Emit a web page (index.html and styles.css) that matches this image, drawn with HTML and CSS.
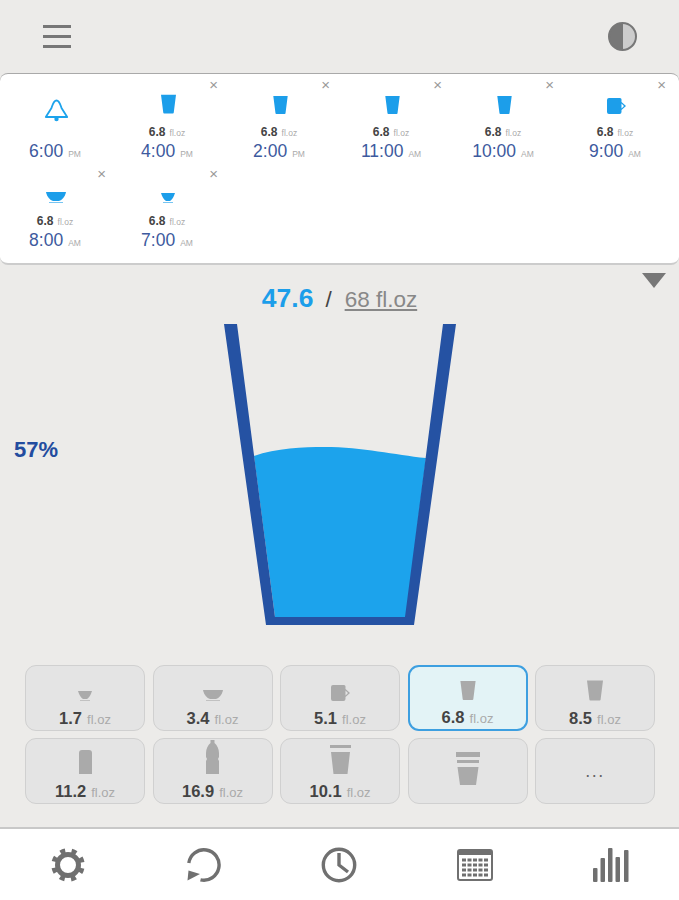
FILE: index.html
```html
<!DOCTYPE html>
<html lang="en">
<head>
    <meta charset="UTF-8">
    <meta name="viewport" content="width=device-width, initial-scale=1.0">
    <title>Water Tracker</title>
    <link rel="stylesheet" href="styles.css">
</head>
<body>
    <svg class="defs" width="0" height="0">
        <symbol id="cup" viewBox="0 0 16 20"><path d="M0 0H16L13.6 19a1 1 0 0 1-1 1H3.4a1 1 0 0 1-1-1Z"/></symbol>
        <symbol id="mug" viewBox="0 0 19 16"><path fill-rule="evenodd" d="M2 0H13a1.500 1.500 0 0 1 1.500 1.500V4L19 8l-4.500 4V14a2 2 0 0 1-2 2H2a2 2 0 0 1-2-2V2a2 2 0 0 1 2-2ZM14.500 5.500V10.500L17 8Z"/></symbol>
        <symbol id="bowl" viewBox="0 0 20 11"><path d="M0 0H20C19 5 16 8 13 9H7C4 8 1 5 0 0Z"/><path d="M3 10H17V11H3Z" opacity=".6"/></symbol>
        <symbol id="small" viewBox="0 0 14 10"><path d="M0 0H14C13 4 10.500 7 9 8H5C3.500 7 1 4 0 0Z"/><path d="M2 9H12V10H2Z" opacity=".6"/></symbol>
        <symbol id="flask" viewBox="0 0 13 24"><path d="M3 0H10a3 3 0 0 1 3 3V24H0V3a3 3 0 0 1 3-3Z"/></symbol>
        <symbol id="bottle" viewBox="0 0 13 34"><path d="M4.500 0H8.500V3C11 5 13 9 13 13V17L12 19 13 21V34H0V21L1 19 0 17V13C0 9 2 5 4.500 3Z"/></symbol>
        <symbol id="lidcup" viewBox="0 0 21 29"><path d="M0 0H21V3H0ZM1 7H20L17.500 29H3.500Z"/></symbol>
        <symbol id="stack" viewBox="0 0 24 33"><path d="M0 0H24V5H0ZM1 8H23V11H1ZM1.500 15H22.500L20 33H4Z"/></symbol>
    </svg>

    <header class="top-bar">
        <button class="menu-btn" aria-label="Menu"><span></span><span></span><span></span></button>
        <div class="theme-btn"></div>
    </header>

    <section class="log-card">
        <div class="log-item">
            <svg class="bell" width="25" height="25" viewBox="0 0 25 25"><path d="M12.500 2.500C9.500 2.500 8.500 7 7.500 10L1.800 19H23.200L17.500 10C16.500 7 15.500 2.500 12.500 2.500Z" fill="none" stroke="currentColor" stroke-width="1.800" stroke-linejoin="round"/><circle cx="12.500" cy="21" r="2.200" fill="currentColor"/></svg>
            <div class="log-time">6:00<small>PM</small></div>
        </div>
        <div class="log-item">
            <span class="close">×</span>
            <svg class="log-icon" width="15" height="20"><use href="#cup"/></svg>
            <div class="log-amount">6.8<small>fl.oz</small></div>
            <div class="log-time">4:00<small>PM</small></div>
        </div>
        <div class="log-item">
            <span class="close">×</span>
            <svg class="log-icon" width="15" height="18"><use href="#cup"/></svg>
            <div class="log-amount">6.8<small>fl.oz</small></div>
            <div class="log-time">2:00<small>PM</small></div>
        </div>
        <div class="log-item">
            <span class="close">×</span>
            <svg class="log-icon" width="15" height="18"><use href="#cup"/></svg>
            <div class="log-amount">6.8<small>fl.oz</small></div>
            <div class="log-time">11:00<small>AM</small></div>
        </div>
        <div class="log-item">
            <span class="close">×</span>
            <svg class="log-icon" width="15" height="18"><use href="#cup"/></svg>
            <div class="log-amount">6.8<small>fl.oz</small></div>
            <div class="log-time">10:00<small>AM</small></div>
        </div>
        <div class="log-item">
            <span class="close">×</span>
            <svg class="log-icon" width="19" height="16"><use href="#mug"/></svg>
            <div class="log-amount">6.8<small>fl.oz</small></div>
            <div class="log-time">9:00<small>AM</small></div>
        </div>
        <div class="log-item">
            <span class="close">×</span>
            <svg class="log-icon" width="20" height="11"><use href="#bowl"/></svg>
            <div class="log-amount">6.8<small>fl.oz</small></div>
            <div class="log-time">8:00<small>AM</small></div>
        </div>
        <div class="log-item">
            <span class="close">×</span>
            <svg class="log-icon" width="14" height="10"><use href="#small"/></svg>
            <div class="log-amount">6.8<small>fl.oz</small></div>
            <div class="log-time">7:00<small>AM</small></div>
        </div>
    </section>

    <div class="total-row">
        <span></span>
        <div class="total"><b>47.6</b><i>/</i><u>68 fl.oz</u></div>
        <div class="arrow"></div>
    </div>

    <section class="glass-row">
        <div class="percent">57%</div>
        <svg class="glass" width="232" height="301" viewBox="0 0 232 301">
            <path d="M30 132C52 124 80 123 100 123C140 123 170 131 202 134L182 293H51Z" fill="#1ca3ec"/>
            <path d="M0 0H13L51 293H181L219 0H232L190 301H42Z" fill="#2552a3"/>
        </svg>
    </section>

    <section class="tiles">
        <button class="tile"><svg width="14" height="10"><use href="#small"/></svg><span class="tile-label">1.7<small>fl.oz</small></span></button>
        <button class="tile"><svg width="20" height="11"><use href="#bowl"/></svg><span class="tile-label">3.4<small>fl.oz</small></span></button>
        <button class="tile"><svg width="19" height="16"><use href="#mug"/></svg><span class="tile-label">5.1<small>fl.oz</small></span></button>
        <button class="tile active"><svg width="16" height="19"><use href="#cup"/></svg><span class="tile-label">6.8<small>fl.oz</small></span></button>
        <button class="tile"><svg width="16" height="21"><use href="#cup"/></svg><span class="tile-label">8.5<small>fl.oz</small></span></button>
        <button class="tile"><svg width="13" height="24"><use href="#flask"/></svg><span class="tile-label">11.2<small>fl.oz</small></span></button>
        <button class="tile"><svg width="13" height="34"><use href="#bottle"/></svg><span class="tile-label">16.9<small>fl.oz</small></span></button>
        <button class="tile"><svg width="21" height="29"><use href="#lidcup"/></svg><span class="tile-label">10.1<small>fl.oz</small></span></button>
        <button class="tile plain"><svg width="24" height="33"><use href="#stack"/></svg></button>
        <button class="tile plain more">...</button>
    </section>

    <nav class="tab-bar">
        <svg width="36" height="36" viewBox="0 0 36 36" fill="none" stroke="currentColor">
            <circle cx="18" cy="18" r="10.500" stroke-width="5"/>
            <circle cx="18" cy="18" r="14.500" stroke-width="4.500" stroke-dasharray="5 6.390" transform="rotate(12.600 18 18)"/>
        </svg>
        <svg width="36" height="36" viewBox="0 0 36 36" fill="none" stroke="currentColor">
            <path d="M2.800 16A15.200 15.200 0 1 1 14.500 32.800" stroke-width="3.400"/>
            <path d="M1.500 33.500L2.500 23.500L14 27Z" fill="currentColor" stroke="none"/>
        </svg>
        <svg width="36" height="36" viewBox="0 0 36 36" fill="none" stroke="currentColor">
            <circle cx="18" cy="18" r="15.700" stroke-width="3.400"/>
            <path d="M18 6V18L27 25" stroke-width="3.400"/>
        </svg>
        <svg width="36" height="32" viewBox="0 0 36 32" fill="none" stroke="currentColor">
            <rect x="1" y="1" width="34" height="30" rx="2" stroke-width="2"/>
            <path d="M1 3.500H35" stroke-width="5"/>
            <path d="M5 11H31M5 16H31M5 21H31M5 26H31" stroke-width="3" stroke-dasharray="4 1.500"/>
        </svg>
        <svg width="38" height="34" viewBox="0 0 38 34" fill="currentColor">
            <rect x="1" y="20" width="4.500" height="14" rx="1"/>
            <rect x="8.500" y="10" width="4.500" height="24" rx="1"/>
            <rect x="16" y="0" width="4.500" height="34" rx="1"/>
            <rect x="23.500" y="9" width="4.500" height="25" rx="1"/>
            <rect x="32" y="2" width="4.500" height="32" rx="1"/>
        </svg>
    </nav>
</body>
</html>
```

FILE: styles.css
```css
body {
    font-family: "Liberation Sans", Arial, sans-serif;
    background-color: #ecebe9;
    margin: 0;
    height: 900px;
    overflow: hidden;
}

.defs {
    display: block;
    height: 0;
}

button {
    font-family: inherit;
}

/* top bar */
.top-bar {
    height: 73px;
    display: flex;
    align-items: center;
    justify-content: space-between;
    padding: 0 43px;
    box-sizing: border-box;
}

.menu-btn {
    display: flex;
    flex-direction: column;
    gap: 7.5px;
    width: 28px;
    padding: 0;
    border: none;
    background: none;
}

.menu-btn span {
    height: 2.5px;
    background-color: #777;
}

.theme-btn {
    width: 25px;
    height: 25px;
    border: 2px solid #777;
    border-radius: 50%;
    margin-right: -1px;
    background: linear-gradient(90deg, #777 50%, #ccc 50%);
}

/* today's log */
.log-card {
    height: 192px;
    box-sizing: border-box;
    padding-top: 2px;
    background-color: #fff;
    border-top: 1px solid #a9a9a9;
    border-bottom: 2px solid #ccc;
    border-radius: 8px;
    display: grid;
    grid-template-columns: repeat(6, 112px);
    grid-auto-rows: 89px;
    align-content: start;
}

.log-item {
    position: relative;
    display: flex;
    flex-direction: column;
    align-items: center;
    justify-content: flex-end;
    padding-bottom: 1px;
    color: #1ca3ec;
}

.log-icon {
    fill: #1c9eea;
    margin-bottom: 11px;
}

.bell {
    margin-bottom: 18px;
}

.close {
    position: absolute;
    top: 1px;
    right: 6px;
    font-size: 15px;
    line-height: 15px;
    color: #999;
}

.log-amount {
    font-size: 12px;
    font-weight: bold;
    line-height: 14px;
    margin: 0 2px 1px 0;
    color: #444;
}

.log-amount small {
    font-size: 8.5px;
    font-weight: normal;
    color: #aaa;
    margin-left: 4px;
}

.log-time {
    font-size: 17.5px;
    line-height: 20px;
    margin-right: 2px;
    color: #3d5a9e;
}

.log-time small {
    font-size: 8.5px;
    color: #aaa;
    margin-left: 5px;
}

/* total */
.total-row {
    height: 59px;
    display: grid;
    grid-template-columns: 1fr auto 1fr;
    align-items: center;
}

.total {
    display: flex;
    align-items: baseline;
    padding-top: 7px;
    color: #888;
    font-size: 22.5px;
}

.total b {
    font-size: 26.5px;
    color: #1c9eea;
}

.total i {
    font-style: normal;
    color: #444;
    margin: 0 13px 0 12px;
}

.arrow {
    justify-self: end;
    align-self: start;
    margin: 8px 13px 0 0;
    border-left: 12px solid transparent;
    border-right: 12px solid transparent;
    border-top: 15px solid #777;
}

/* glass */
.glass-row {
    display: grid;
    grid-template-columns: 224px 232px;
    height: 301px;
}

.percent {
    font-size: 22px;
    font-weight: bold;
    color: #234c9f;
    padding: 113px 0 0 14px;
}

/* quick add */
.tiles {
    display: grid;
    grid-template-columns: repeat(5, 120px);
    grid-auto-rows: 66px;
    gap: 7px 7.5px;
    margin: 40px 0 23px 25px;
}

.tile {
    display: flex;
    flex-direction: column;
    align-items: center;
    justify-content: flex-end;
    padding: 0 0 1px;
    box-sizing: border-box;
    background-color: #e4e4e4;
    border: 1.5px solid #d0d0d0;
    border-radius: 11px;
    fill: #aaa;
}

.tile svg {
    margin-bottom: 8px;
}

.tile.active {
    background-color: #e3f3f6;
    border: 2px solid #3d9fe0;
}

.tile.plain {
    justify-content: center;
    padding: 0;
}

.tile.plain svg {
    margin: 0 0 5px;
}

.tile.more {
    font-size: 18px;
    letter-spacing: 1.5px;
    color: #666;
}

.tile-label {
    font-size: 16.5px;
    font-weight: bold;
    line-height: 18px;
    color: #444;
}

.tile-label small {
    font-size: 13px;
    font-weight: normal;
    color: #aaa;
    margin-left: 5px;
}

/* bottom tabs */
.tab-bar {
    height: 73px;
    box-sizing: border-box;
    background-color: #fff;
    border-top: 2px solid #c8c8c8;
    display: grid;
    grid-template-columns: repeat(5, 1fr);
    justify-items: center;
    align-items: center;
    color: #707070;
}
```
